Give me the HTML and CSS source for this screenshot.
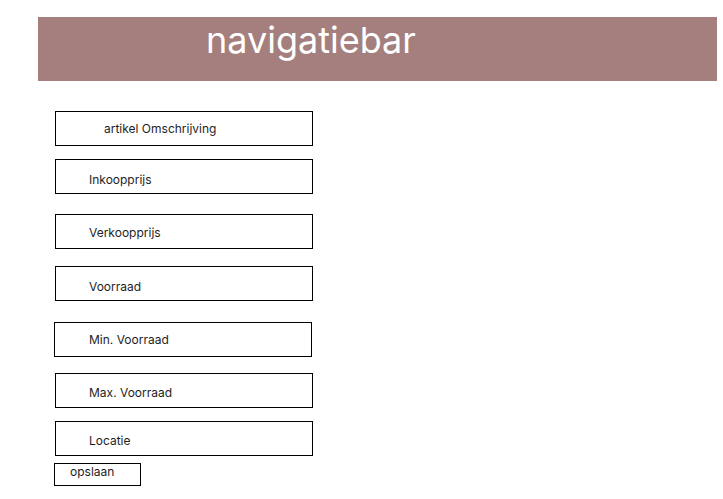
FILE: index.html
```html
<!DOCTYPE html>
<html lang="nl">
<head>
<meta charset="utf-8">
<title>Artikel</title>
<link rel="stylesheet" href="styles.css">
</head>
<body>
<div class="page">
  <header class="navbar">
    <h1 class="navbar-title">navigatiebar</h1>
  </header>
  <form class="form">
    <div class="field field-wide">artikel Omschrijving</div>
    <div class="field gap-13 drop-3">Inkoopprijs</div>
    <div class="field gap-20 drop-1">Verkoopprijs</div>
    <div class="field gap-17 drop-3">Voorraad</div>
    <div class="field gap-21 shift-left">Min. Voorraad</div>
    <div class="field gap-16 drop-2">Max. Voorraad</div>
    <div class="field gap-13 drop-2">Locatie</div>
    <div class="button">opslaan</div>
  </form>
</div>
</body>
</html>
```

FILE: styles.css
```css
* { box-sizing: border-box; }
html, body { margin: 0; padding: 0; background: #ffffff; }
body {
  font-family: Inter, "Noto Sans", sans-serif;
  color: #1e1e1e;
  width: 723px;
  height: 499px;
  overflow: hidden;
}
.page {
  padding: 17px 0 0 38px;
}
.navbar {
  width: 679px;
  height: 64px;
  background: #a47f7d;
  display: flex;
  align-items: flex-start;
  padding-left: 168px;
}
.navbar-title {
  margin: 0;
  font-weight: 400;
  font-size: 36px;
  line-height: 46px;
  color: #ffffff;
}
.form {
  display: flex;
  flex-direction: column;
  align-items: flex-start;
  padding: 30px 0 0 17px;
}
.field {
  width: 258px;
  height: 35px;
  border: 1px solid #000000;
  display: flex;
  align-items: center;
  padding-left: 33px;
  font-size: 12px;
  color: #1e1e1e;
}
.field-wide { padding-left: 48px; }
.drop-1 { padding-top: 2px; }
.drop-2 { padding-top: 4px; }
.drop-3 { padding-top: 6px; }
.gap-13 { margin-top: 13px; }
.gap-16 { margin-top: 16px; }
.gap-17 { margin-top: 17px; }
.gap-20 { margin-top: 20px; }
.gap-21 { margin-top: 21px; }
.shift-left { margin-left: -1px; padding-left: 34px; }
.button {
  margin-top: 7px;
  margin-left: -1px;
  width: 87px;
  height: 23px;
  border: 1px solid #000000;
  font-size: 12px;
  line-height: 14px;
  padding: 1px 0 0 15px;
  color: #1e1e1e;
}
```
